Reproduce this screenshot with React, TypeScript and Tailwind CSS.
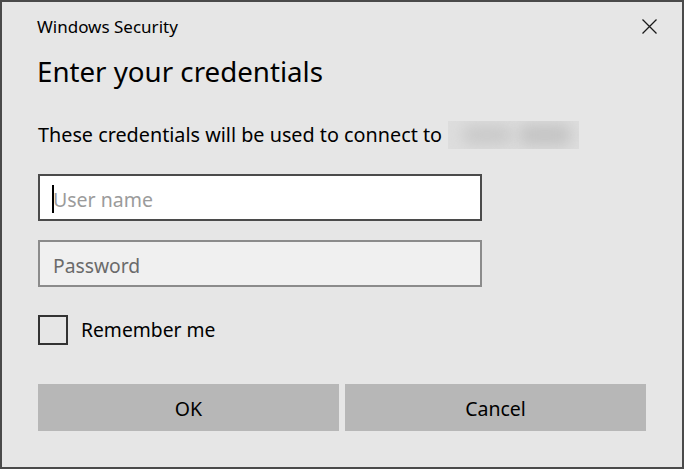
import React from "react";

const font = { fontFamily: '"Noto Sans", "Open Sans", sans-serif' };

function CloseIcon() {
  return (
    <svg width="15" height="15" viewBox="0 0 15 15" className="block">
      <path d="M0.5 0.5 L14.5 14.5 M14.5 0.5 L0.5 14.5" stroke="#1a1a1a" strokeWidth="1.3" fill="none" />
    </svg>
  );
}

// blurred-out host name from the screenshot
function RedactedHost() {
  return (
    <div className="relative ml-[6px] h-[28px] w-[131px] overflow-hidden bg-[#dddddd]">
      <div className="absolute left-[14px] top-[4px] h-[20px] w-[50px] rounded-full bg-[#cacaca] blur-[7px]" />
      <div className="absolute left-[70px] top-[3px] h-[22px] w-[54px] rounded-full bg-[#c5c5c5] blur-[7px]" />
    </div>
  );
}

export default function App() {
  return (
    <div style={font} className="h-[469px] w-[684px] border-2 border-[#4a4a4a] bg-[#e6e6e6] text-black">
      <div className="flex items-start justify-between pl-[35px] pr-[25px] pt-[15px]">
        <div className="text-[17px] leading-[20px]">Windows Security</div>
        <div className="mt-[2px]">
          <CloseIcon />
        </div>
      </div>

      <div className="px-[36px]">
        <h1 className="-ml-[1px] mt-[18px] text-[27.7px] leading-[32px] font-normal">Enter your credentials</h1>

        <div className="mt-[34px] flex items-center">
          <span className="text-[19.8px] leading-[26px]">These credentials will be used to connect to</span>
          <RedactedHost />
        </div>

        <div className="relative mt-[25px] flex h-[47px] w-[444px] items-center border-2 border-[#4b4b4b] bg-white pl-[13px] pt-[4px]">
          <span className="absolute left-[12px] top-[9px] h-[28px] w-[2px] bg-black" />
          <span className="text-[19.5px] leading-[26px] text-[#9b9b9b]">User name</span>
        </div>

        <div className="mt-[19px] flex h-[47px] w-[444px] items-center border-2 border-[#8b8b8b] bg-[#f0f0f0] pl-[13px] pt-[4px]">
          <span className="text-[19.3px] leading-[26px] text-[#6a6a6a]">Password</span>
        </div>

        <label className="mt-[28px] flex items-center gap-[13px]">
          <span className="h-[30px] w-[30px] border-2 border-[#333333]" />
          <span className="text-[19.3px] leading-[26px]">Remember me</span>
        </label>

        <div className="mt-[39px] flex gap-[6px]">
          <button className="h-[47px] w-[301px] bg-[#b7b7b7] pt-[2px] text-[19.5px] leading-[26px]">OK</button>
          <button className="h-[47px] w-[301px] bg-[#b7b7b7] pt-[2px] text-[19.5px] leading-[26px]">Cancel</button>
        </div>
      </div>
    </div>
  );
}
